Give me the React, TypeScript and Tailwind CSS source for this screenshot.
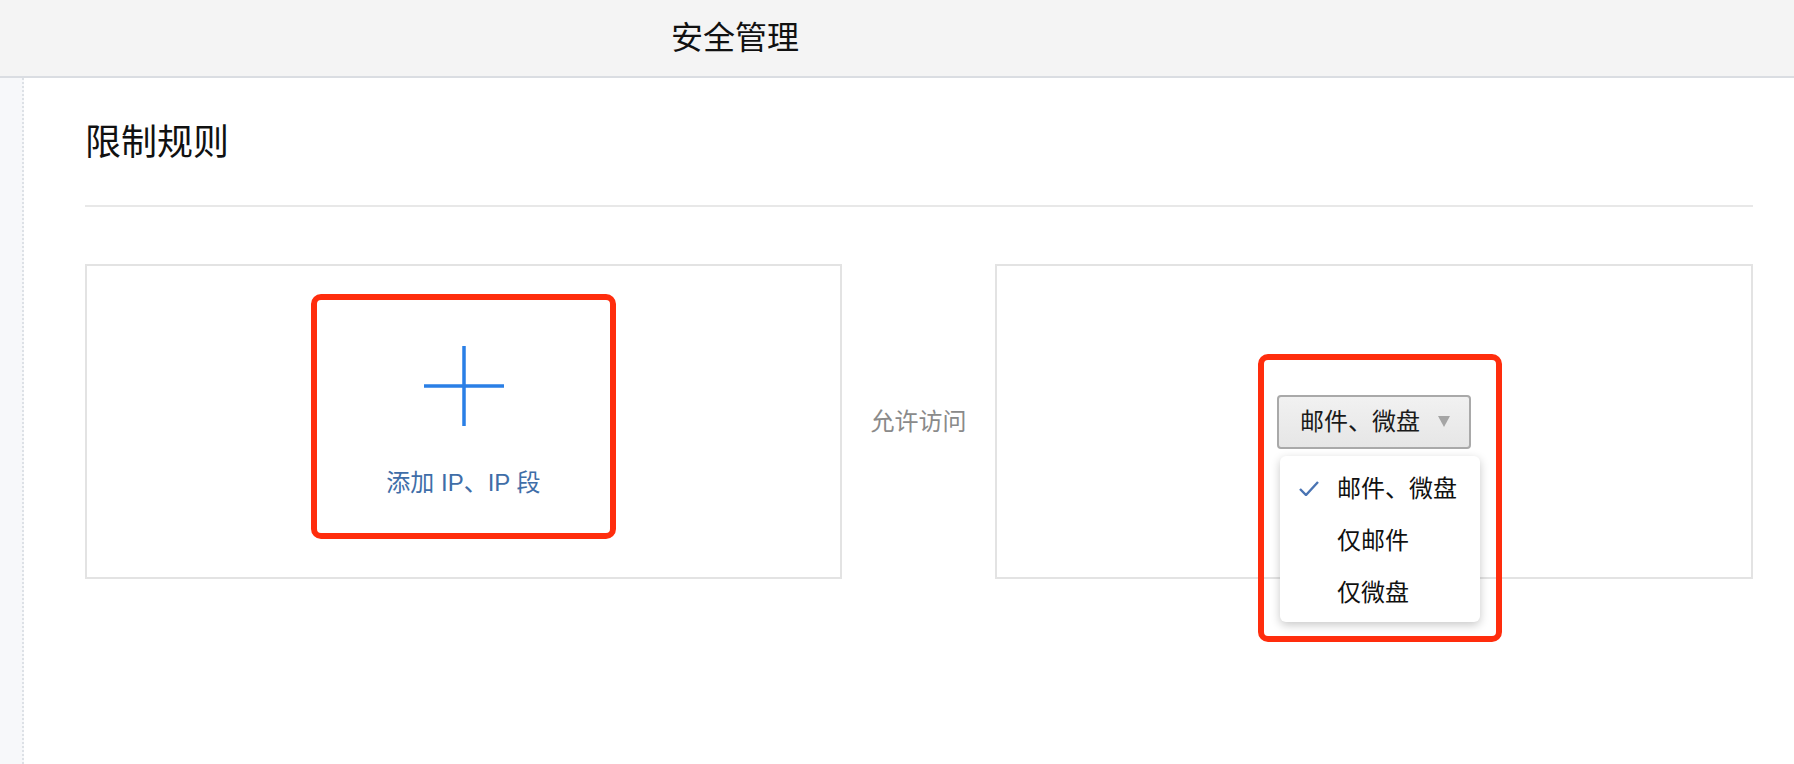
import React from "react";

const FONT = {
  fontFamily:
    '"Liberation Sans", "Noto Sans CJK SC", "Noto Sans", sans-serif',
};

function PlusIcon() {
  return (
    <svg width="80" height="80" viewBox="0 0 80 80">
      <path d="M40 0V80M0 40H80" stroke="#2a7fe6" strokeWidth="3.5" />
    </svg>
  );
}

function CheckIcon() {
  return (
    <svg width="20" height="15" viewBox="0 0 20 15">
      <polyline
        points="1,8 7,14 19,1"
        fill="none"
        stroke="#4a74b3"
        strokeWidth="2.4"
      />
    </svg>
  );
}

const options = ["邮件、微盘", "仅邮件", "仅微盘"];

export default function App() {
  return (
    <div className="flex min-h-screen flex-col bg-white" style={FONT}>
      <header className="flex h-[78px] shrink-0 items-center border-b-2 border-[#dadde2] bg-[#f4f4f4] pl-[671px]">
        <span className="text-[32px] leading-[40px] text-[#111]">安全管理</span>
      </header>

      <div className="flex flex-1">
        <div className="w-[24px] shrink-0 border-r-2 border-dotted border-[#dde1e6] bg-[#f7f8fa]" />

        <main className="flex-1 pl-[61px] pr-[41px]">
          <h1 className="pt-[41px] text-[36px] leading-[48px] font-normal text-[#111]">
            限制规则
          </h1>
          <div className="mt-[38px] h-[2px] bg-[#e8e8e8]" />

          <div className="mt-[57px] flex">
            {/* left card */}
            <div className="flex h-[315px] w-[757px] shrink-0 justify-center border-2 border-[#e3e3e3] pt-[28px]">
              <div className="flex h-[245px] w-[305px] flex-col items-center rounded-[10px] border-[6px] border-[#ff2d0d]">
                <div className="mt-[46px]">
                  <PlusIcon />
                </div>
                <p className="mt-[41px] text-[24px] leading-[32px] text-[#3f6ea8]">
                  添加 IP、IP 段
                </p>
              </div>
            </div>

            {/* middle label */}
            <div className="flex flex-1 items-center justify-center">
              <span className="text-[24px] leading-[32px] text-[#8a8a8a]">
                允许访问
              </span>
            </div>

            {/* right card */}
            <div className="flex h-[315px] w-[758px] shrink-0 items-center justify-center border-2 border-[#e3e3e3]">
              <div className="relative">
                <button className="flex h-[54px] w-[194px] items-center rounded-[4px] border-2 border-[#a9a9a9] bg-gradient-to-b from-[#f1f1f1] to-[#e6e6e6] pl-[21px] text-[24px] leading-[32px] text-[#1a1a1a]">
                  <span>邮件、微盘</span>
                  <svg
                    className="ml-[18px]"
                    width="12"
                    height="11"
                    viewBox="0 0 12 11"
                  >
                    <path d="M0 0H12L6 11Z" fill="#a5a5a5" />
                  </svg>
                </button>

                <ul className="absolute left-[3px] top-[61px] z-10 w-[200px] rounded-[6px] bg-white pt-[7px] pb-[3px] shadow-[0_3px_10px_rgba(0,0,0,0.22)]">
                  {options.map((o, i) => (
                    <li
                      key={o}
                      className="flex h-[52px] items-center text-[24px] leading-[32px] text-[#111]"
                    >
                      <span className="flex w-[57px] justify-end pr-[18px]">
                        {i === 0 && <CheckIcon />}
                      </span>
                      {o}
                    </li>
                  ))}
                </ul>

                <div className="pointer-events-none absolute -left-[19px] -top-[41px] z-20 h-[288px] w-[244px] rounded-[10px] border-[6px] border-[#ff2d0d]" />
              </div>
            </div>
          </div>
        </main>
      </div>
    </div>
  );
}
